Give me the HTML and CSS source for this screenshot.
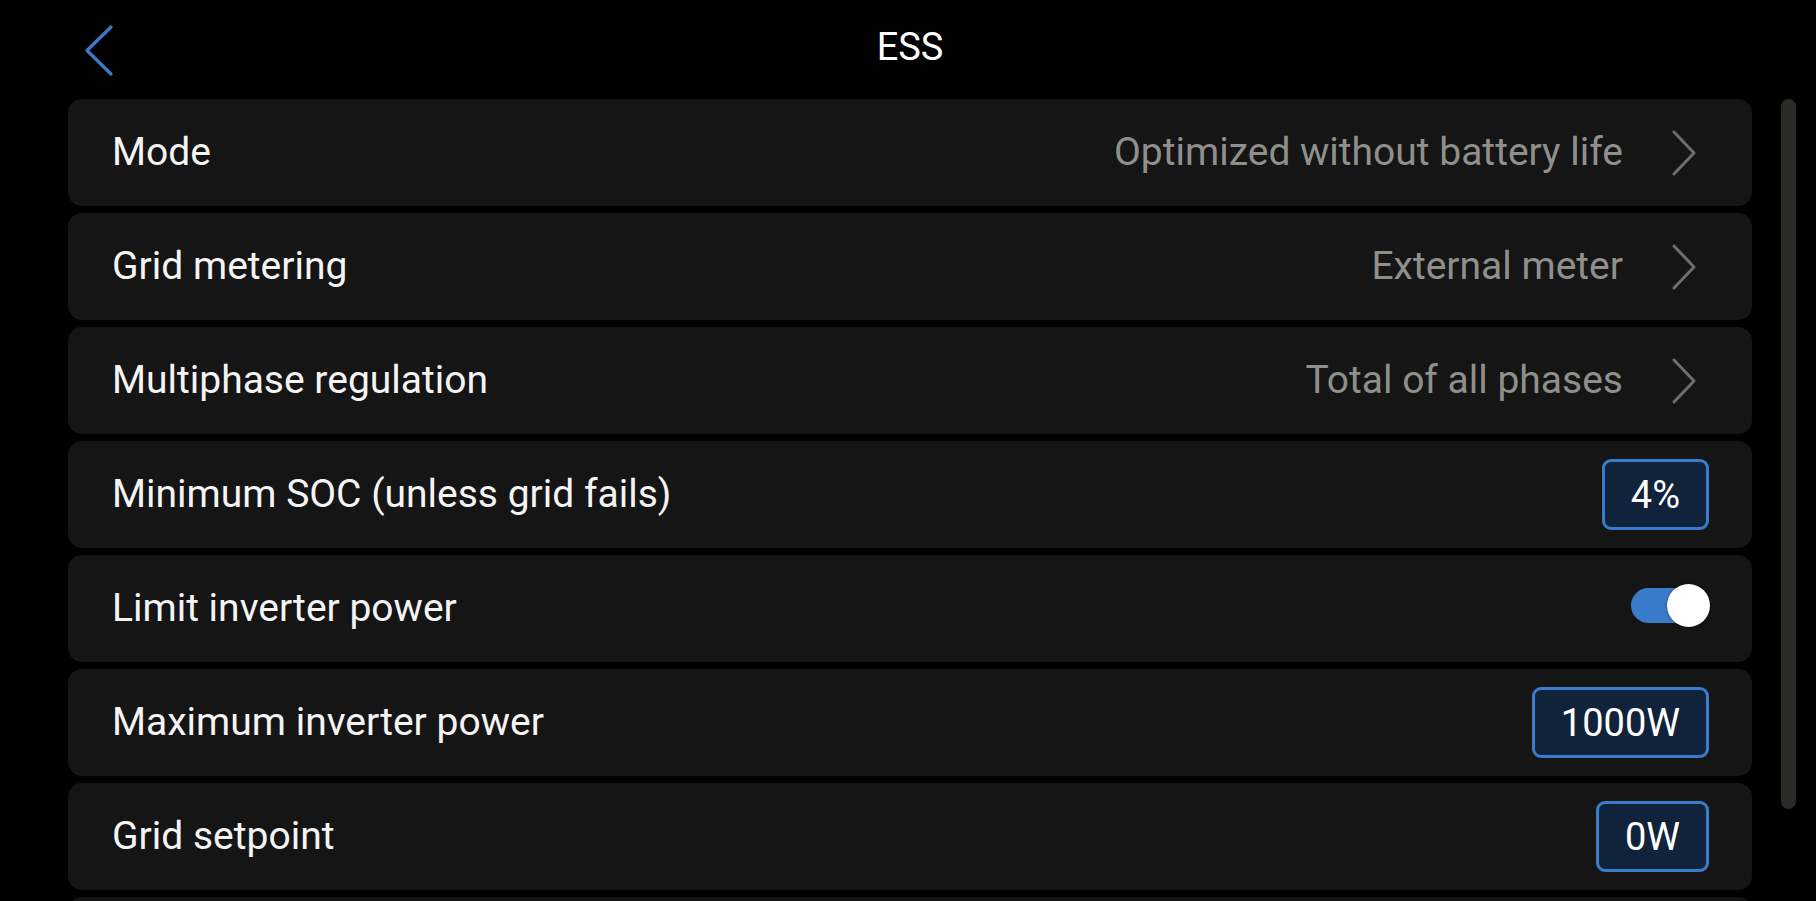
FILE: index.html
```html
<!DOCTYPE html>
<html lang="en">
<head>
<meta charset="utf-8">
<title>ESS</title>
<link rel="stylesheet" href="styles.css">
</head>
<body>
<div class="screen">
  <header class="header">
    <div class="back">
      <svg class="back-icon" width="32" height="54" viewBox="0 0 32 54" aria-hidden="true">
        <path d="M27 3 L3 26.5 L27 50" fill="none" stroke="#3a7ccc" stroke-width="3.2" stroke-linecap="round" stroke-linejoin="round"/>
      </svg>
    </div>
    <h1 class="title">ESS</h1>
    <div></div>
  </header>
  <div class="body">
    <div class="list">
      <div class="item">
        <span class="label">Mode</span>
        <div class="right">
          <span class="value">Optimized without battery life</span>
          <svg class="chev" width="26" height="46" viewBox="0 0 26 46" aria-hidden="true"><path d="M3 2 L23 23 L3 44" fill="none" stroke="#6d6d6b" stroke-width="3" stroke-linecap="round" stroke-linejoin="round"/></svg>
        </div>
      </div>
      <div class="item">
        <span class="label">Grid metering</span>
        <div class="right">
          <span class="value">External meter</span>
          <svg class="chev" width="26" height="46" viewBox="0 0 26 46" aria-hidden="true"><path d="M3 2 L23 23 L3 44" fill="none" stroke="#6d6d6b" stroke-width="3" stroke-linecap="round" stroke-linejoin="round"/></svg>
        </div>
      </div>
      <div class="item">
        <span class="label">Multiphase regulation</span>
        <div class="right">
          <span class="value">Total of all phases</span>
          <svg class="chev" width="26" height="46" viewBox="0 0 26 46" aria-hidden="true"><path d="M3 2 L23 23 L3 44" fill="none" stroke="#6d6d6b" stroke-width="3" stroke-linecap="round" stroke-linejoin="round"/></svg>
        </div>
      </div>
      <div class="item">
        <span class="label">Minimum SOC (unless grid fails)</span>
        <div class="right"><span class="box">4%</span></div>
      </div>
      <div class="item">
        <span class="label">Limit inverter power</span>
        <div class="right">
          <span class="switch"><span class="knob"></span></span>
        </div>
      </div>
      <div class="item">
        <span class="label">Maximum inverter power</span>
        <div class="right"><span class="box">1000W</span></div>
      </div>
      <div class="item">
        <span class="label">Grid setpoint</span>
        <div class="right"><span class="box">0W</span></div>
      </div>
      <div class="item"></div>
    </div>
    <div class="scrollbar"></div>
  </div>
</div>
</body>
</html>
```
FILE: styles.css
```css
html, body {
  margin: 0;
  padding: 0;
  background: #000;
  height: 100%;
  overflow: hidden;
}

body {
  font-family: Roboto, "Noto Sans", "Liberation Sans", sans-serif;
  color: #f4f4f4;
}

.screen {
  width: 1816px;
  height: 901px;
  overflow: hidden;
}

.header {
  display: grid;
  grid-template-columns: 1fr auto 1fr;
  align-items: center;
  height: 99px;
  margin-left: 68px;
  width: 1684px;
}

.back {
  display: flex;
  align-items: center;
  padding-left: 16px;
  padding-top: 2px;
}

.back-icon {
  display: block;
}

.title {
  margin: 0;
  font-size: 38px;
  font-weight: 400;
  color: #ffffff;
  line-height: 1;
  padding-bottom: 6px;
}

.body {
  display: flex;
  align-items: flex-start;
}

.list {
  margin-left: 68px;
  width: 1684px;
  display: flex;
  flex-direction: column;
  gap: 7px;
}

.item {
  height: 107px;
  flex: 0 0 107px;
  box-sizing: border-box;
  background: #151515;
  border-radius: 14px;
  display: flex;
  align-items: center;
  justify-content: space-between;
  padding: 0 43px 0 44px;
}

.label {
  font-size: 39px;
  color: #f4f4f4;
  line-height: 1;
}

.right {
  display: flex;
  align-items: center;
}

.value {
  font-size: 39px;
  color: #8f8f8c;
  line-height: 1;
}

.chev {
  display: block;
  margin-left: 48px;
  margin-right: 12px;
}

.box {
  display: inline-flex;
  align-items: center;
  justify-content: center;
  box-sizing: border-box;
  height: 71px;
  padding: 0 26px;
  border: 3px solid #3a7ccc;
  border-radius: 9px;
  background: #11233a;
  font-size: 38px;
  color: #ffffff;
  line-height: 1;
}

.switch {
  position: relative;
  display: block;
  width: 78px;
  height: 35px;
  border-radius: 18px;
  background: #3a7ccc;
  margin-top: -6px;
}

.knob {
  position: absolute;
  right: -1px;
  top: -4px;
  width: 43px;
  height: 43px;
  border-radius: 50%;
  background: #ffffff;
  box-shadow: 0 0 3px rgba(0, 0, 0, 0.5);
}

.scrollbar {
  margin-left: 29px;
  width: 15px;
  height: 710px;
  border-radius: 8px;
  background: #2b2a27;
}
```
